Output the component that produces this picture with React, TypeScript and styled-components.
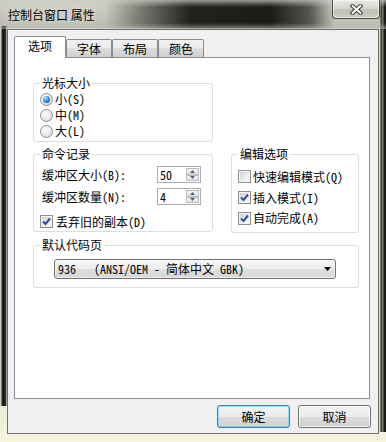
import styled, { createGlobalStyle } from 'styled-components';

const UI_FONT = `"Noto Sans Mono CJK SC", "Noto Sans CJK SC", "DejaVu Sans Mono", monospace`;
const CAPTION_FONT = `"Noto Sans CJK SC", "Noto Sans", sans-serif`;

const GlobalStyle = createGlobalStyle`
  html, body { margin: 0; padding: 0; }
  body {
    background: #1a1a18;
    font-family: ${UI_FONT};
    font-size: 12px;
    color: #000;
  }
  * { box-sizing: border-box; }
`;

const Window = styled.div`
  width: 386px;
  height: 442px;
  padding: 0 7px 8px;
  display: flex;
  flex-direction: column;
  background:
    linear-gradient(90deg, #cfcec4 0 1px, #262622 2px, #121210 4px, #3d3c36 6px, #8b8a80 7px) 0 26px / 7px 380px no-repeat,
    linear-gradient(90deg, #c6c5ba 0 1px, #2a2a25 2px, #8a897f 4px, #151512 5px, #1c1c18 7px) 379px 0 / 7px 432px no-repeat,
    linear-gradient(#d2d1c8 0, #bcbbb1 28px, #c9c8bc 60%, #ecebd4 92%, #f6f4dd 100%);
`;

/* blurred glass behind the caption: a dark band that fades out at both ends and at top/bottom */
const TitleBar = styled.div`
  height: 29px;
  margin: 0 -7px;
  padding: 0 7px;
  display: flex;
  justify-content: space-between;
  align-items: flex-start;
  background:
    linear-gradient(rgba(205, 204, 196, 0.7) 0, rgba(205, 204, 196, 0) 7px, rgba(205, 204, 196, 0) 23px, rgba(190, 189, 180, 0.6) 29px),
    linear-gradient(90deg, rgba(20, 20, 17, 0) 105px, rgba(60, 60, 54, 0.55) 140px, rgba(16, 16, 14, 0.9) 190px, rgba(12, 12, 10, 0.92) 270px, rgba(40, 40, 35, 0.7) 310px, rgba(40, 40, 35, 0) 335px);
`;

const Caption = styled.div`
  padding: 8px 0 0 1px;
  font-family: ${CAPTION_FONT};
  line-height: 14px;
  text-shadow: 0 0 6px rgba(255, 255, 255, 0.9);
`;

const CloseButton = styled.div`
  width: 48px;
  height: 19px;
  margin-right: -1px;
  border: 1px solid rgba(0, 0, 0, 0.65);
  border-top: none;
  border-radius: 0 0 4px 4px;
  background: linear-gradient(rgba(235, 235, 228, 0.9), rgba(215, 215, 206, 0.85) 50%, rgba(190, 190, 180, 0.8) 50%, rgba(205, 205, 196, 0.85));
  box-shadow: inset 0 0 0 1px rgba(255, 255, 255, 0.55);
  display: flex;
  align-items: center;
  justify-content: center;
`;

const Client = styled.div`
  flex: 1;
  display: flex;
  flex-direction: column;
  background: #f0f0f0;
  border: 1px solid #6f6f6a;
  box-shadow: 0 0 0 1px rgba(255, 255, 255, 0.35);
  padding: 6px 8px 5px 6px;
`;

const TabStrip = styled.div`
  height: 21px;
  display: flex;
  align-items: flex-end;
  position: relative;
  z-index: 1;
`;

const Tab = styled.div<{ $active?: boolean }>`
  height: ${(p) => (p.$active ? 22 : 18)}px;
  margin-bottom: ${(p) => (p.$active ? -1 : 0)}px;
  padding: 0 ${(p) => (p.$active ? 13 : 10)}px ${(p) => (p.$active ? 3 : 0)}px;
  border: 1px solid #898c95;
  border-bottom: none;
  border-radius: 2px 2px 0 0;
  background: ${(p) =>
    p.$active ? '#fff' : 'linear-gradient(#f2f2f2 0%, #ebebeb 50%, #dddddd 50%, #cfcfcf 100%)'};
  display: flex;
  align-items: center;
  justify-content: center;
  font-family: ${CAPTION_FONT};
  line-height: 14px;
`;

const Panel = styled.div`
  flex: 1;
  background: #fff;
  border: 1px solid #898c95;
  padding: 18px 10px 0 18px;
  display: grid;
  grid-template-columns: 180px 1fr;
  grid-template-areas:
    'cursor .'
    'history edit'
    'codepage codepage';
  column-gap: 18px;
  row-gap: 5px;
  align-content: start;
  align-items: start;
`;

const Group = styled.fieldset<{ $area: string; $top: number; $bottom: number }>`
  grid-area: ${(p) => p.$area};
  margin: 0;
  min-width: 0;
  border: 1px solid #d5dfe5;
  border-radius: 3px;
  padding: ${(p) => p.$top}px 6px ${(p) => p.$bottom}px;
  display: flex;
  flex-direction: column;
`;

const Legend = styled.legend`
  padding: 0 2px;
  line-height: 14px;
  font-family: ${CAPTION_FONT};
`;

const OptionRow = styled.div<{ $height: number; $gap: number; $gapTop?: number }>`
  height: ${(p) => p.$height}px;
  margin-top: ${(p) => p.$gapTop ?? 0}px;
  display: flex;
  align-items: center;
  gap: ${(p) => p.$gap}px;
  line-height: 14px;
  white-space: nowrap;
`;

const RadioMark = styled.span<{ $checked?: boolean }>`
  width: 13px;
  height: 13px;
  flex: none;
  border-radius: 50%;
  border: 1px solid #8e8f8f;
  background: radial-gradient(circle at 40% 35%, #ffffff 0, #ececec 45%, #cfcfcf 100%);
  display: flex;
  align-items: center;
  justify-content: center;
  &::after {
    content: '';
    display: ${(p) => (p.$checked ? 'block' : 'none')};
    width: 7px;
    height: 7px;
    border-radius: 50%;
    background: radial-gradient(circle at 35% 30%, #b4ecff 0, #3b9be0 40%, #0d447f 100%);
  }
`;

const CheckBox = styled.span`
  width: 13px;
  height: 13px;
  flex: none;
  border: 1px solid #8e8f8f;
  background: linear-gradient(135deg, #cdcdcd 0%, #ededed 60%, #fafafa 100%);
  box-shadow: inset 0 0 0 1px #f4f4f4;
  display: flex;
  align-items: center;
  justify-content: center;
`;

const SpinRow = styled.div<{ $gapTop: number }>`
  margin-top: ${(p) => p.$gapTop}px;
  height: 17px;
  display: flex;
  align-items: center;
  padding-left: 2px;
  line-height: 14px;
`;

const SpinLabel = styled.span`
  width: 115px;
  white-space: nowrap;
`;

const SpinBox = styled.div`
  width: 44px;
  height: 17px;
  border: 1px solid #abadb3;
  background: #fff;
  display: flex;
`;

const SpinValue = styled.span`
  flex: 1;
  padding-left: 2px;
  line-height: 15px;
`;

const SpinButtons = styled.div`
  width: 13px;
  margin: 1px 1px 1px 0;
  display: flex;
  flex-direction: column;
`;

const SpinButton = styled.span`
  flex: 1;
  border: 1px solid #bcbcbc;
  background: linear-gradient(#f6f6f6, #e2e2e2);
  display: flex;
  align-items: center;
  justify-content: center;
`;

const Dropdown = styled.div`
  margin-left: 14px;
  width: 282px;
  height: 20px;
  border: 1px solid #707070;
  border-radius: 3px;
  background: linear-gradient(#f4f4f4 0%, #ededed 50%, #e0e0e0 50%, #d6d6d6 100%);
  box-shadow: inset 0 0 0 1px rgba(255, 255, 255, 0.6);
  display: flex;
  align-items: center;
  padding: 0 4px 0 3px;
  white-space: pre;
  line-height: 14px;
`;

const DropdownArrow = styled.svg`
  margin-left: auto;
`;

const ActionRow = styled.div`
  margin-top: 6px;
  margin-right: -1px;
  display: flex;
  justify-content: flex-end;
  gap: 8px;
`;

const DialogButton = styled.button<{ $default?: boolean }>`
  width: 73px;
  height: 23px;
  padding: 0;
  border: 1px solid ${(p) => (p.$default ? '#3c7fb1' : '#707070')};
  border-radius: 3px;
  background: linear-gradient(#f2f2f2 0%, #ebebeb 50%, #dddddd 50%, #cfcfcf 100%);
  box-shadow: inset 0 0 0 1px ${(p) => (p.$default ? 'rgba(72, 209, 255, 0.55)' : 'rgba(255, 255, 255, 0.8)')};
  font-family: ${CAPTION_FONT};
  font-size: 12px;
  color: #000;
`;

const CheckGlyph = () => (
  <svg width="9" height="9" viewBox="0 0 9 9">
    <path d="M1 4.5 L3.5 7 L8 1.5" fill="none" stroke="#2d4f9c" strokeWidth="2" />
  </svg>
);

const Check = ({ checked }: { checked?: boolean }) => <CheckBox>{checked && <CheckGlyph />}</CheckBox>;

const Arrow = ({ up }: { up?: boolean }) => (
  <svg width="5" height="3" viewBox="0 0 5 3">
    <polygon points={up ? '0,3 5,3 2.5,0' : '0,0 5,0 2.5,3'} fill="#4d6185" />
  </svg>
);

const Spinner = ({ value }: { value: string }) => (
  <SpinBox>
    <SpinValue>{value}</SpinValue>
    <SpinButtons>
      <SpinButton>
        <Arrow up />
      </SpinButton>
      <SpinButton>
        <Arrow />
      </SpinButton>
    </SpinButtons>
  </SpinBox>
);

const App = () => {
  return (
    <>
      <GlobalStyle />
      <Window>
        <TitleBar>
          <Caption>控制台窗口 属性</Caption>
          <CloseButton>
            <svg width="13" height="11" viewBox="0 0 13 11">
              <path d="M2.5 2 L10.5 9 M10.5 2 L2.5 9" stroke="#3a3a3a" strokeWidth="4" strokeLinecap="square" />
              <path d="M2.5 2 L10.5 9 M10.5 2 L2.5 9" stroke="#fff" strokeWidth="2" strokeLinecap="square" />
            </svg>
          </CloseButton>
        </TitleBar>
        <Client>
          <TabStrip>
            <Tab $active>选项</Tab>
            <Tab>字体</Tab>
            <Tab>布局</Tab>
            <Tab>颜色</Tab>
          </TabStrip>
          <Panel>
            <Group $area="cursor" $top={1} $bottom={2}>
              <Legend>光标大小</Legend>
              <OptionRow $height={16} $gap={2}>
                <RadioMark $checked />小(S)
              </OptionRow>
              <OptionRow $height={16} $gap={2}>
                <RadioMark />中(M)
              </OptionRow>
              <OptionRow $height={16} $gap={2}>
                <RadioMark />大(L)
              </OptionRow>
            </Group>

            <Group $area="history" $top={0} $bottom={2}>
              <Legend>命令记录</Legend>
              <SpinRow $gapTop={5}>
                <SpinLabel>缓冲区大小(B):</SpinLabel>
                <Spinner value="50" />
              </SpinRow>
              <SpinRow $gapTop={5}>
                <SpinLabel>缓冲区数量(N):</SpinLabel>
                <Spinner value="4" />
              </SpinRow>
              <OptionRow $height={15} $gap={3} $gapTop={9}>
                <Check checked />丢弃旧的副本(D)
              </OptionRow>
            </Group>

            <Group $area="edit" $top={5} $bottom={4}>
              <Legend>编辑选项</Legend>
              <OptionRow $height={21} $gap={2}>
                <Check />快速编辑模式(Q)
              </OptionRow>
              <OptionRow $height={21} $gap={2}>
                <Check checked />插入模式(I)
              </OptionRow>
              <OptionRow $height={20} $gap={2}>
                <Check checked />自动完成(A)
              </OptionRow>
            </Group>

            <Group $area="codepage" $top={7} $bottom={8}>
              <Legend>默认代码页</Legend>
              <Dropdown>
                {'936   (ANSI/OEM - 简体中文 GBK)'}
                <DropdownArrow width="7" height="4" viewBox="0 0 7 4">
                  <polygon points="0,0 7,0 3.5,4" fill="#000" />
                </DropdownArrow>
              </Dropdown>
            </Group>
          </Panel>
          <ActionRow>
            <DialogButton $default>确定</DialogButton>
            <DialogButton>取消</DialogButton>
          </ActionRow>
        </Client>
      </Window>
    </>
  );
};

export default App;
